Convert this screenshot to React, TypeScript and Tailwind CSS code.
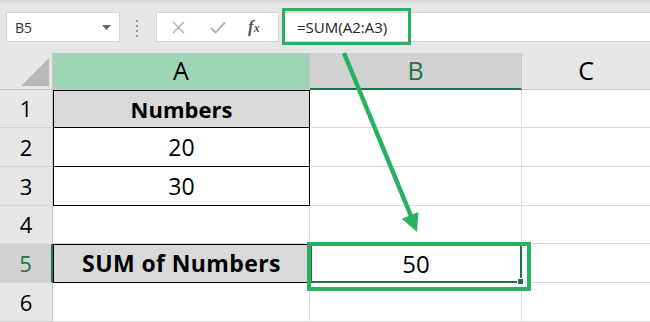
import React from "react";

const font = { fontFamily: '"Open Sans", "Liberation Sans", sans-serif' };

function NameBox() {
  return (
    <div className="absolute left-[6px] top-[12px] flex h-[30px] w-[114px] items-center justify-between border border-[#d4d4d4] bg-white pl-[8px] pr-[8px]">
      <span className="text-[14px] text-[#333]">B5</span>
      <svg width="9" height="5" viewBox="0 0 9 5">
        <path d="M0 0 L9 0 L4.5 5 Z" fill="#666" />
      </svg>
    </div>
  );
}

function FormulaButtons() {
  return (
    <div className="absolute left-[156px] top-[12px] flex h-[30px] w-[123px] items-center border border-[#d4d4d4] bg-white">
      <svg className="ml-[15px]" width="13" height="13" viewBox="0 0 13 13">
        <path d="M1 1 L12 12 M12 1 L1 12" stroke="#b5b5b5" strokeWidth="1.6" />
      </svg>
      <svg className="ml-[25px]" width="16" height="13" viewBox="0 0 16 13">
        <path d="M1 7 L5.5 11.5 L15 1.5" stroke="#b5b5b5" strokeWidth="2" fill="none" />
      </svg>
      <span
        className="ml-[22px] text-[17px] font-bold italic text-[#555]"
        style={{ fontFamily: '"Liberation Serif", serif' }}
      >
        f<span className="text-[12px]">x</span>
      </span>
    </div>
  );
}

function TopBar() {
  return (
    <div className="relative h-[53px] bg-[#e6e6e6]">
      <div className="absolute inset-x-0 top-0 h-[4px] bg-gradient-to-b from-[#d2d2d2] to-[#e6e6e6]" />
      <NameBox />
      <div className="absolute left-[136px] top-[20px] flex flex-col gap-[3px]">
        <span className="h-[2px] w-[2px] bg-[#9a9a9a]" />
        <span className="h-[2px] w-[2px] bg-[#9a9a9a]" />
        <span className="h-[2px] w-[2px] bg-[#9a9a9a]" />
        <span className="h-[2px] w-[2px] bg-[#9a9a9a]" />
      </div>
      <FormulaButtons />
      <div className="absolute left-[282px] right-0 top-[12px] flex h-[30px] items-center border-y border-[#d4d4d4] bg-white pl-[15px]">
        <span className="text-[15px] text-[#222]">=SUM(A2:A3)</span>
      </div>
      <div className="absolute left-[282px] top-[8px] h-[37px] w-[129px] border-[3px] border-[#27b160]" />
    </div>
  );
}

const rowH = ["h-[38px]", "h-[39px]", "h-[39px]", "h-[38px]", "h-[39px]", "h-[39px]"];

export default function App() {
  return (
    <div className="relative h-[322px] w-[650px] overflow-hidden bg-white" style={font}>
      <TopBar />

      <div className="grid grid-cols-[53px_257px_212px_128px]">
        {/* header row */}
        <div className="relative h-[37px] border-r border-b border-[#c6c6c6] bg-[#e6e6e6]">
          <svg className="absolute bottom-[3px] right-[3px]" width="28" height="28" viewBox="0 0 28 28">
            <path d="M28 0 L28 28 L0 28 Z" fill="#b9b9b9" />
          </svg>
        </div>
        <div className="flex h-[37px] items-center justify-center border-r border-b border-[#c6c6c6] bg-[#9fd5b7] text-[25px] text-black">
          A
        </div>
        <div className="flex h-[37px] items-center justify-center border-r border-b-2 border-r-[#c6c6c6] border-b-[#217346] bg-[#d2d2d2] text-[25px] text-[#217346]">
          B
        </div>
        <div className="flex h-[37px] items-center justify-center border-b border-[#c6c6c6] bg-[#e6e6e6] text-[25px] text-black">
          C
        </div>

        {[1, 2, 3, 4, 5, 6].map((r, i) => {
          const sel = r === 5;
          return (
            <React.Fragment key={r}>
              <div
                className={`flex ${rowH[i]} items-center justify-center border-b border-b-[#d4d4d4] text-[22px] ${
                  sel
                    ? "border-r-2 border-r-[#217346] bg-[#d2d2d2] text-[#217346]"
                    : "border-r border-r-[#c6c6c6] bg-[#e6e6e6] text-black"
                }`}
              >
                {r}
              </div>
              {r === 1 && (
                <div className="flex h-[38px] items-center justify-center border border-black bg-[#d9d9d9] text-[22px] font-bold text-black">
                  Numbers
                </div>
              )}
              {(r === 2 || r === 3) && (
                <div className="flex h-[39px] items-center justify-center border-x border-b border-black text-[23px] text-black">
                  {r === 2 ? "20" : "30"}
                </div>
              )}
              {(r === 4 || r === 6) && (
                <div className={`${rowH[i]} border-r border-b border-[#dadada]`} />
              )}
              {r === 5 && (
                <div className="flex h-[39px] items-center justify-center border border-black bg-[#d9d9d9] text-[23px] font-bold tracking-[0.4px] text-black">
                  SUM of Numbers
                </div>
              )}
              {r === 5 ? (
                <div className="relative flex h-[39px] items-center justify-center border-2 border-[#217346] text-[24px] text-black">
                  50
                  <span className="absolute -bottom-[4px] -right-[4px] h-[7px] w-[7px] border border-white bg-[#217346]" />
                  <span className="absolute -left-[5px] -top-[4px] h-[49px] w-[224px] border-4 border-[#27b160]" />
                </div>
              ) : (
                <div className={`${rowH[i]} border-r border-b border-[#dadada]`} />
              )}
              <div className={`${rowH[i]} border-b border-[#dadada]`} />
            </React.Fragment>
          );
        })}
      </div>

      <svg className="pointer-events-none absolute left-0 top-0" width="650" height="322" viewBox="0 0 650 322">
        <line x1="344" y1="53" x2="411" y2="216" stroke="#27b160" strokeWidth="4.5" />
        <path d="M417 232 L401.8 218.8 L418.4 212 Z" fill="#27b160" />
      </svg>
    </div>
  );
}
